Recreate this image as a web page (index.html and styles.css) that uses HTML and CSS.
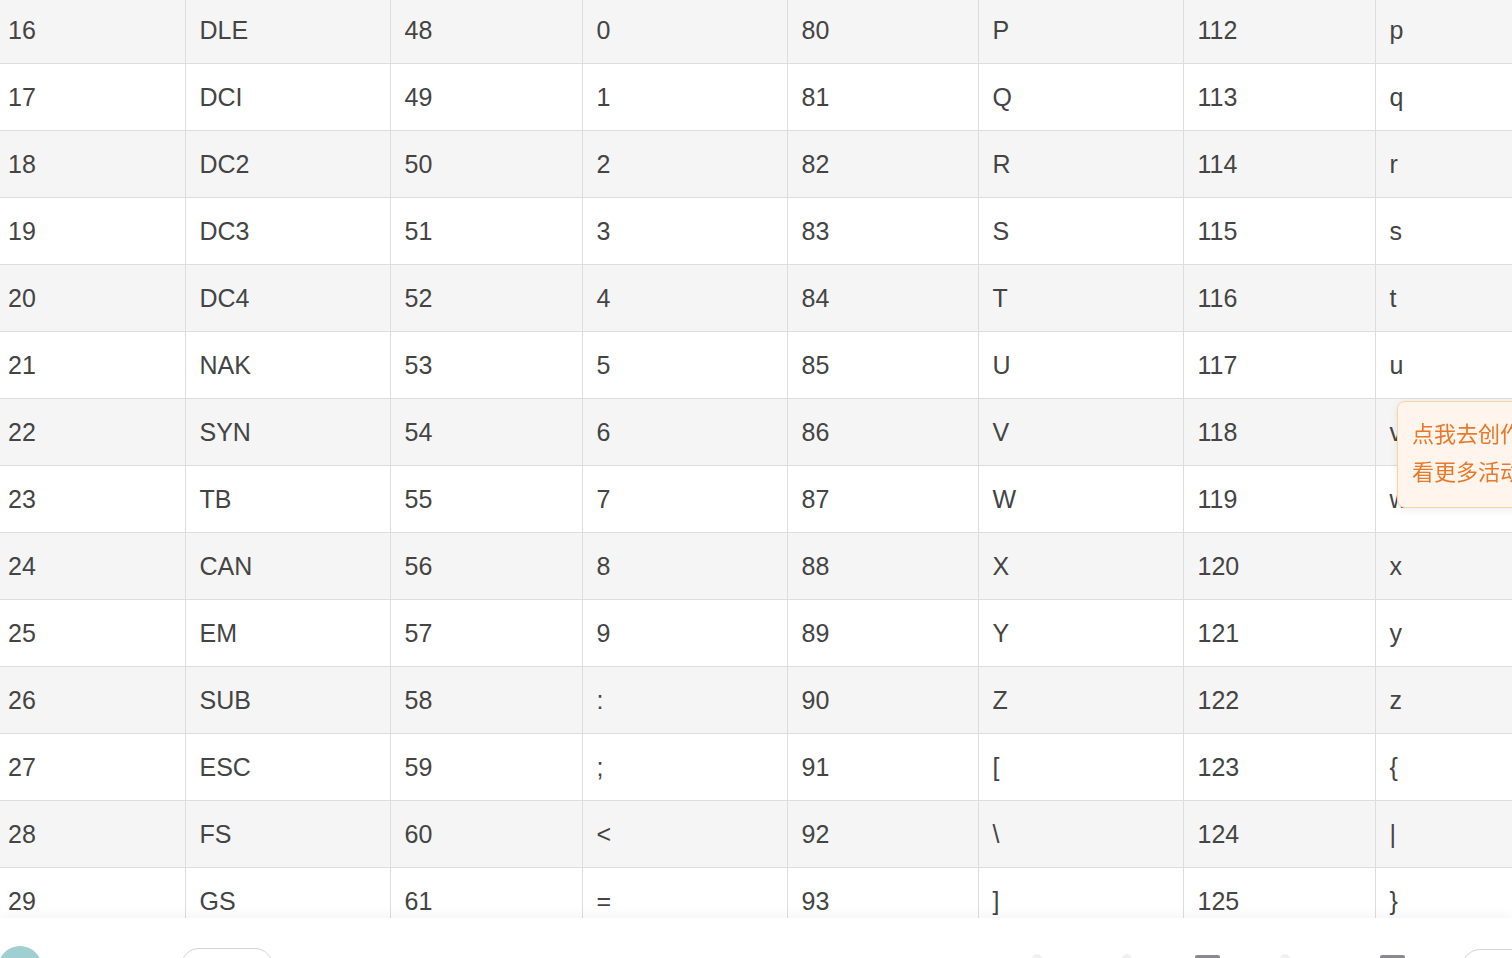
FILE: index.html
```html
<!DOCTYPE html>
<html lang="zh-CN">
<head>
<meta charset="utf-8">
<title>ASCII</title>
<link rel="stylesheet" href="styles.css">
</head>
<body>
<div class="page">
  <table class="ascii">
    <colgroup>
      <col class="c-a"><col class="c-b"><col class="c-a"><col class="c-b">
      <col class="c-a2"><col class="c-b"><col class="c-a"><col class="c-b">
    </colgroup>
    <tbody>
      <tr><td>16</td><td>DLE</td><td>48</td><td>0</td><td>80</td><td>P</td><td>112</td><td>p</td></tr>
      <tr><td>17</td><td>DCI</td><td>49</td><td>1</td><td>81</td><td>Q</td><td>113</td><td>q</td></tr>
      <tr><td>18</td><td>DC2</td><td>50</td><td>2</td><td>82</td><td>R</td><td>114</td><td>r</td></tr>
      <tr><td>19</td><td>DC3</td><td>51</td><td>3</td><td>83</td><td>S</td><td>115</td><td>s</td></tr>
      <tr><td>20</td><td>DC4</td><td>52</td><td>4</td><td>84</td><td>T</td><td>116</td><td>t</td></tr>
      <tr><td>21</td><td>NAK</td><td>53</td><td>5</td><td>85</td><td>U</td><td>117</td><td>u</td></tr>
      <tr><td>22</td><td>SYN</td><td>54</td><td>6</td><td>86</td><td>V</td><td>118</td><td>v</td></tr>
      <tr><td>23</td><td>TB</td><td>55</td><td>7</td><td>87</td><td>W</td><td>119</td><td>w</td></tr>
      <tr><td>24</td><td>CAN</td><td>56</td><td>8</td><td>88</td><td>X</td><td>120</td><td>x</td></tr>
      <tr><td>25</td><td>EM</td><td>57</td><td>9</td><td>89</td><td>Y</td><td>121</td><td>y</td></tr>
      <tr><td>26</td><td>SUB</td><td>58</td><td>:</td><td>90</td><td>Z</td><td>122</td><td>z</td></tr>
      <tr><td>27</td><td>ESC</td><td>59</td><td>;</td><td>91</td><td>[</td><td>123</td><td>{</td></tr>
      <tr><td>28</td><td>FS</td><td>60</td><td>&lt;</td><td>92</td><td>\</td><td>124</td><td>|</td></tr>
      <tr><td>29</td><td>GS</td><td>61</td><td>=</td><td>93</td><td>]</td><td>125</td><td>}</td></tr>
    </tbody>
  </table>
</div>

<div class="tip">
  <div class="tip-line">点我去创作</div>
  <div class="tip-line">看更多活动</div>
</div>

<div class="bottombar">
  <div class="bb-left">
    <span class="avatar"></span>
    <span class="pill"></span>
  </div>
  <div class="bb-right">
    <span class="dot dot-1"></span>
    <span class="dot dot-2"></span>
    <span class="bar bar-1"></span>
    <span class="dot dot-3"></span>
    <span class="bar bar-2"></span>
    <span class="pill pill-r"></span>
  </div>
</div>
</body>
</html>
```

FILE: styles.css
```css
html, body {
  margin: 0;
  padding: 0;
  overflow: hidden;
  background: #fff;
}

body {
  font-family: "Liberation Sans", Arial, sans-serif;
  color: #444;
}

.page {
  margin-top: -3px;
  margin-left: -7px;
}

.ascii {
  border-collapse: collapse;
  table-layout: fixed;
  width: 1587px;
  font-size: 25px;
}

.c-a { width: 192px; }
.c-a2 { width: 191px; }
.c-b { width: 205px; }

.ascii td {
  height: 66px;
  padding: 0 14px 0 14px;
  border-bottom: 1px solid #dddddd;
  border-left: 1px solid #dddddd;
  vertical-align: middle;
  white-space: nowrap;
  line-height: 1;
}

.ascii td:first-child {
  border-left: none;
  padding-left: 15px;
}

.ascii tr:nth-child(odd) td {
  background: #f5f5f5;
}

.ascii tr:nth-child(even) td {
  background: #ffffff;
}

.tip {
  position: fixed;
  left: 1397px;
  top: 401px;
  width: 160px;
  height: 107px;
  box-sizing: border-box;
  padding: 11px 14px 0 14px;
  background: #fff5ec;
  border: 1px solid #fbd2a6;
  border-radius: 8px;
  box-shadow: 0 2px 8px rgba(0, 0, 0, 0.08);
  font-family: "Noto Sans CJK SC", sans-serif;
  font-size: 22px;
  line-height: 38px;
  color: #e9782a;
  white-space: nowrap;
}

.bottombar {
  position: fixed;
  left: 0;
  right: 0;
  top: 918px;
  height: 80px;
  background: #fff;
  box-shadow: 0 -4px 10px rgba(0, 0, 0, 0.04);
  display: flex;
  justify-content: space-between;
  align-items: flex-start;
}

.bb-left {
  display: flex;
  align-items: flex-start;
  gap: 139px;
}

.avatar {
  display: block;
  width: 44px;
  height: 44px;
  margin-top: 28px;
  margin-left: -2px;
  border-radius: 50%;
  background: #9fcfd1;
}

.pill {
  display: block;
  width: 92px;
  height: 36px;
  margin-top: 30px;
  border: 1px solid #d3d3d8;
  border-radius: 18px;
  box-sizing: border-box;
}

.bb-right {
  display: flex;
  align-items: flex-start;
}

.dot {
  display: block;
  width: 10px;
  height: 10px;
  margin-top: 36px;
  border-radius: 50%;
  background: #f0f0f2;
}

.dot-1 { margin-right: 80px; }
.dot-2 { margin-right: 63px; }
.dot-3 { margin-right: 90px; }

.bar {
  display: block;
  width: 25px;
  height: 10px;
  margin-top: 37px;
  border-radius: 2px;
  background: #8a8a90;
}

.bar-1 { margin-right: 60px; }
.bar-2 { margin-right: 57px; }

.pill-r {
  margin-top: 31px;
  margin-right: -40px;
  width: 90px;
}
```
